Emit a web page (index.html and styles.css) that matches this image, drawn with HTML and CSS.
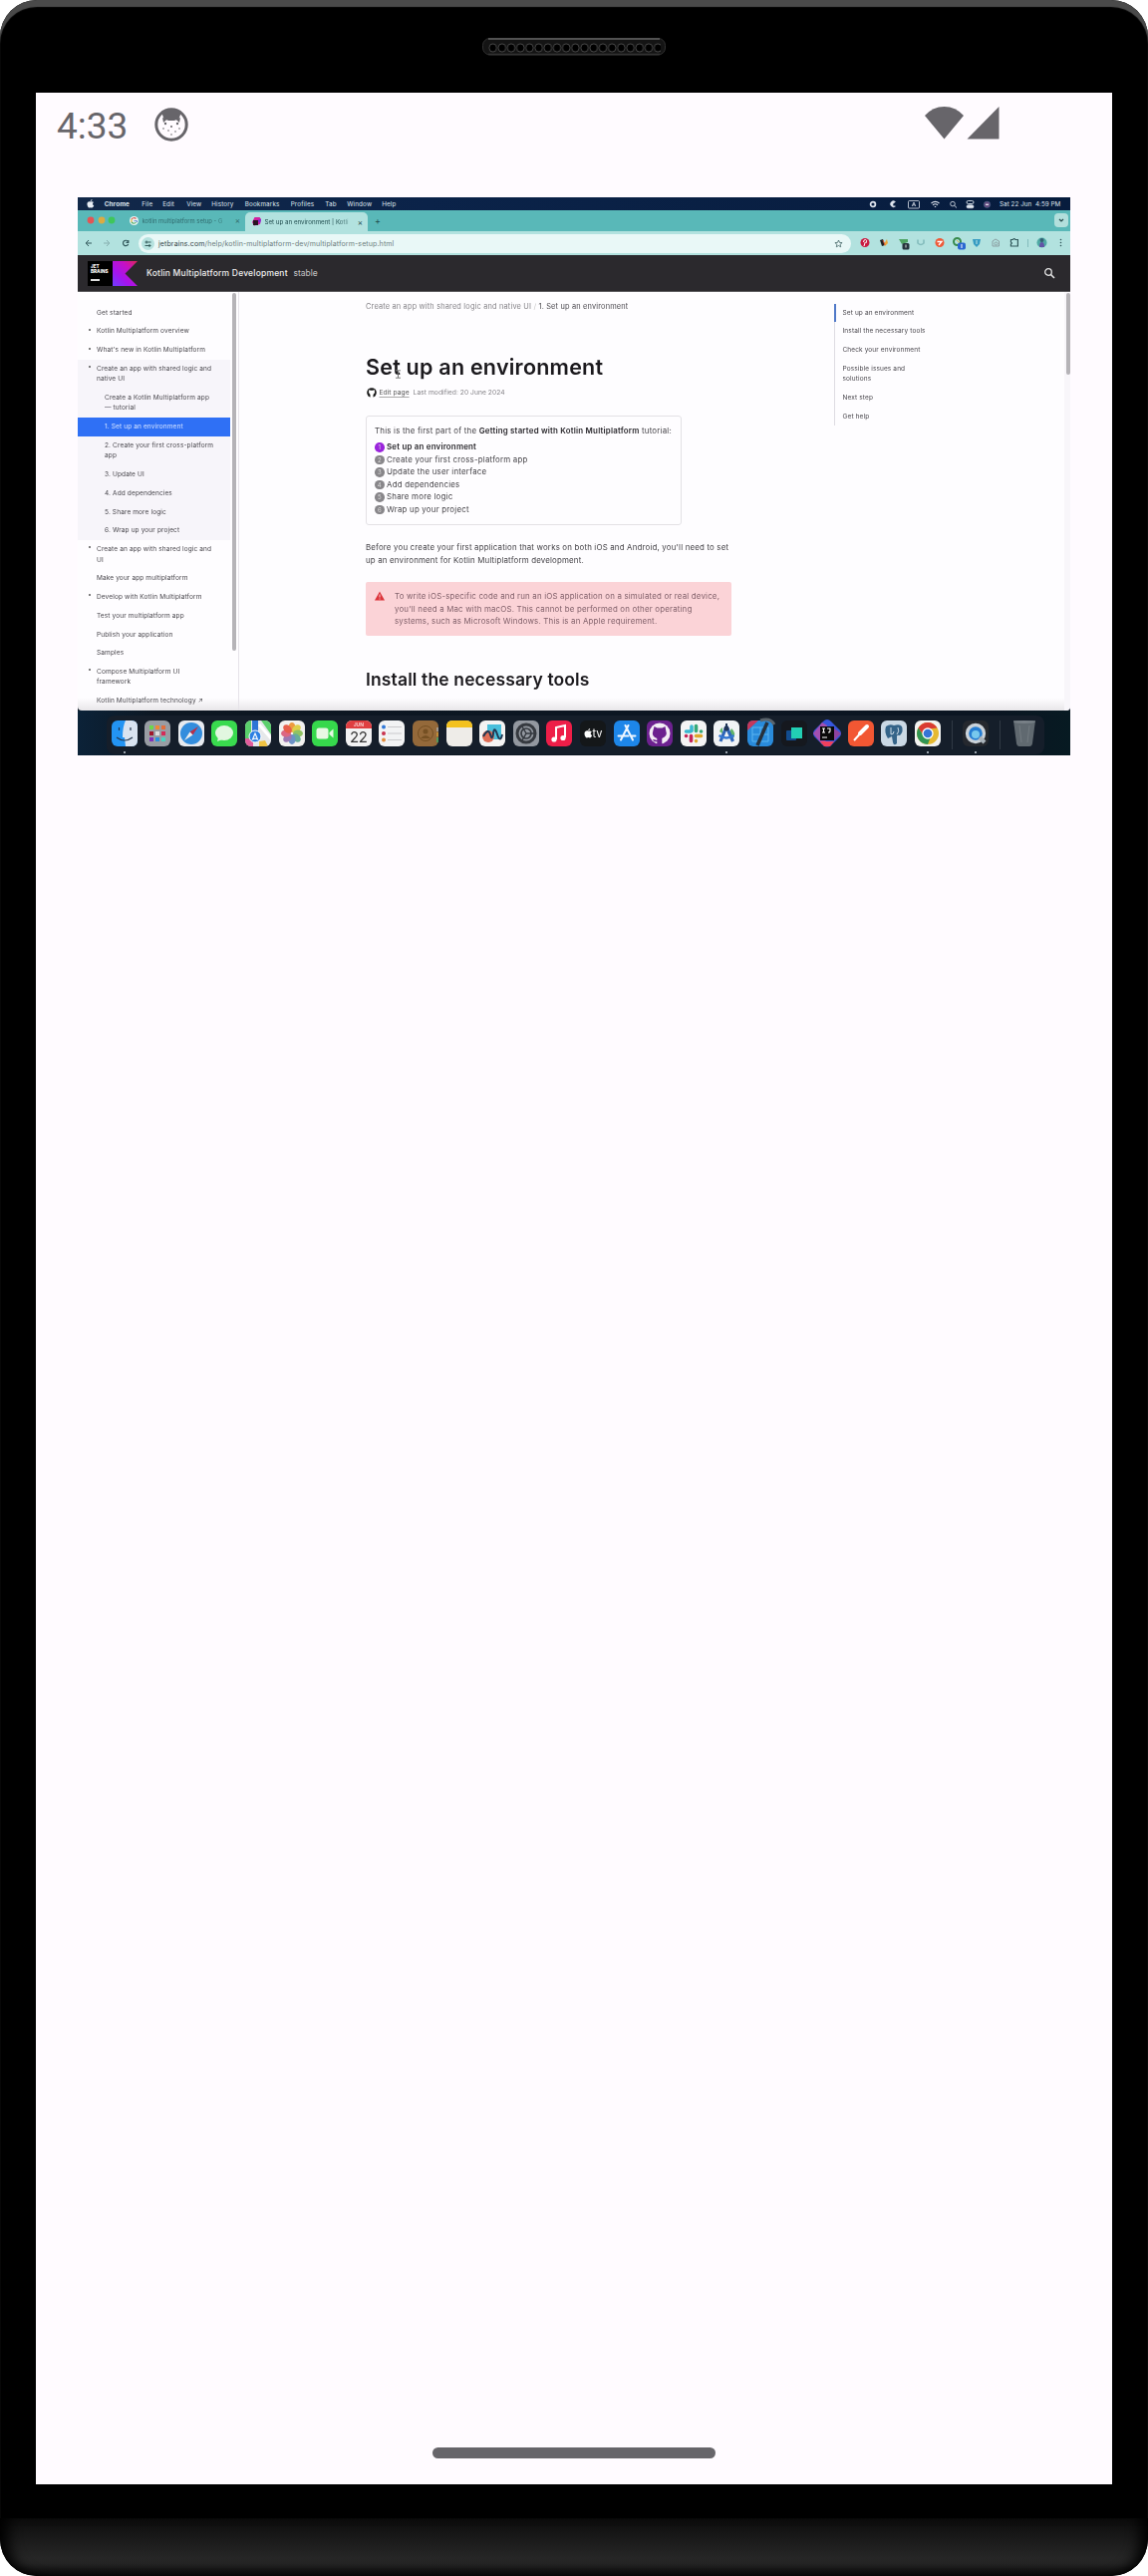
FILE: index.html
```html
<!DOCTYPE html>
<html lang="en">
<head>
<meta charset="utf-8">
<title>Kotlin Multiplatform video</title>
<link rel="stylesheet" href="styles.css">
</head>
<body>
<div class="device">
  <div class="bezel-top"><svg class="speaker" width="184" height="18" viewBox="0 0 184 18">
    <defs><pattern id="holes" x="6" y="0" width="9.2" height="18" patternUnits="userSpaceOnUse"><rect x="1" y="6" width="7.2" height="8" rx="3.4" fill="#000" stroke="#555" stroke-width=".8"/></pattern></defs>
    <rect x=".5" y=".5" width="183" height="16.5" rx="7" fill="#141414" stroke="#303030"/><path d="M6 1h172" stroke="#515151" stroke-width="2"/><path d="M6 16.5h172" stroke="#333" stroke-width="1.4"/><rect x="6" width="173" height="18" fill="url(#holes)"/></svg></div>
  <div class="screen">
    <header class="status">
      <span class="clock">4:33</span>
      <svg class="cat" width="34" height="34" viewBox="0 0 34 34"><circle cx="17" cy="17" r="15.2" fill="none" stroke="#67656a" stroke-width="3"/><path d="M7 4Q17-2 27 4L24 13Q22 11.500 20 13H14Q12 11.500 10 13z" fill="#67656a"/><g fill="#67656a"><path d="M8 10l4 2-3 3zM26 10l-4 2 3 3z"/><circle cx="11" cy="16" r="1.2"/><circle cx="23" cy="16" r="1.2"/><circle cx="17" cy="19" r="1"/><circle cx="9" cy="21" r=".8"/><circle cx="25" cy="21" r=".8"/><circle cx="14" cy="23" r=".8"/><circle cx="21" cy="24" r=".8"/><circle cx="17" cy="27" r=".8"/></g></svg>
      <svg class="signals" width="75" height="33" viewBox="0 0 75 33" fill="#67656a"><path d="M0 9Q8 0 19.500 0T39 9L19.500 32.500z"/><path d="M74.500 0V32.500H42.500z"/></svg>
    </header>

    <div class="video"><div class="desktop">
      <div class="menubar">
        <svg width="8" height="9" viewBox="0 0 16 18" fill="#e8edf4"><path d="M11 0c0 2-1.500 4-3.500 4C7.500 2 9 .5 11 0zM14.500 12.500C13.500 15 12 17 10.500 17S8.500 16.300 7.500 16.300 6 17 5 17C3 17 .8 13 .8 9.500.8 4 6 3.500 8 5c1.500-1 4.500-1 6 1-3 2-2.500 5.500.5 6.500z"/></svg>
        <b>Chrome</b><span>File</span><span>Edit</span><span>View</span><span>History</span><span>Bookmarks</span><span>Profiles</span><span>Tab</span><span>Window</span><span>Help</span>
        <svg class="tray" width="126" height="10" viewBox="0 0 126 10" fill="none" stroke="#dfe5ee"><circle cx="5" cy="5" r="2.400" stroke-width="1.700"/><path d="M27.500 2.500A3 3 0 1 0 27.500 7L25 6.500V4.500z" fill="#dfe5ee" stroke-width=".5"/><rect x="40.500" y="1.500" width="11" height="7.500" rx="1" stroke-width=".8"/><path d="M44.200 7L46 3l1.800 4M45 5.800h2" stroke-width=".8"/><path d="M63.500 4Q67.500 .8 71.500 4M65 5.800q2.500-2 5 0M66.800 7.500h1.400" stroke-width="1.100"/><circle cx="85" cy="4.600" r="2.300" stroke-width=".8"/><path d="M86.700 6.300L89 8.500" stroke-width=".9"/><rect x="99" y="1.500" width="7" height="3" rx="1.500" stroke-width=".9"/><rect x="99" y="5.800" width="7" height="3" rx="1.500" fill="#dfe5ee" stroke-width=".6"/><circle cx="119.500" cy="5.300" r="3.200" fill="#65487d" stroke="#45708c" stroke-width=".5"/><path d="M118 5.300h3" stroke-width="1.300"/></svg>
        <span class="date">Sat 22 Jun&nbsp; 4:59 PM</span>
      </div>
      <div class="tabs">
        <svg width="46" height="10" viewBox="0 0 46 10"><circle cx="13" cy="5" r="3.400" fill="#e25555"/><circle cx="24" cy="5" r="3.400" fill="#dcab42"/><circle cx="34" cy="5" r="3.400" fill="#3fc65b"/></svg>
        <div class="tab idle"><svg width="9" height="9" viewBox="0 0 9 9"><circle cx="4.500" cy="4.500" r="4.500" fill="#e8f5f3"/><path d="M6.500 2.500A3 3 0 0 0 2 3" fill="none" stroke="#d85d55" stroke-width="1.200"/><path d="M2 3v3" stroke="#e3b342" stroke-width="1.200"/><path d="M2 6q2.500 2.500 4.500 0" fill="none" stroke="#4fae68" stroke-width="1.200"/><path d="M4.500 4.700h3V6" fill="none" stroke="#5b88d2"/></svg><span>kotlin multiplatform setup - G</span><i class="x">×</i></div>
        <div class="tab active"><svg width="9" height="9" viewBox="0 0 9 9"><path d="M2.500 0h5L9 2 8 7 2 8.500 0 5z" fill="#d3219f"/><path d="M5 3l4-1-1 4z" fill="#7b28dd"/><rect x="1" y="3" width="5" height="5" fill="#271422"/></svg><span>Set up an environment | Kotli</span><i class="x">×</i></div>
        <i class="plus">+</i>
        <svg class="chev" width="14" height="14" viewBox="0 0 14 14"><rect width="14" height="14" rx="4" fill="#b2dfdc"/><path d="M5 6l2 2 2-2" fill="none" stroke="#24494a" stroke-width="1.200"/></svg>
      </div>
      <div class="toolbar">
        <svg width="54" height="12" viewBox="0 0 54 12" fill="none" stroke="#31575a"><path d="M14 6H8.500M11 3L8.200 6 11 9"/><path d="M26 6h5.500M29 3l2.800 3L29 9" stroke="#85aeae"/><path d="M50.500 4.500A2.700 2.700 0 1 0 50.700 7M50.800 3v2.300h-2.300" stroke-width="1.200"/></svg>
        <div class="omnibox">
          <svg width="13" height="13" viewBox="0 0 13 13"><circle cx="6.500" cy="6.500" r="6.500" fill="#b5e2df"/><path d="M3.500 5h6M3.500 8.500h6M5 3.500v3M8 7v3" stroke="#294e4f" stroke-width=".9"/></svg>
          <span class="url"><b>jetbrains.com</b>/help/kotlin-multiplatform-dev/multiplatform-setup.html</span>
          <svg class="star" width="9" height="9" viewBox="0 0 9 9"><path d="M4.500 1l1 2.400 2.600.2-2 1.700.6 2.500-2.200-1.300-2.200 1.300.6-2.500-2-1.700 2.600-.2z" fill="none" stroke="#466" stroke-width=".8"/></svg>
        </div>
        <svg class="ext" width="212" height="18" viewBox="0 0 212 18" fill="none"><circle cx="6" cy="8.500" r="4.500" fill="#ca1c42"/><path d="M5 12l1.200-4M4.500 8Q4.500 5.500 6.500 5.500T7 9" stroke="#fff"/><path d="M21 6l3-1 2 6-3 1z" fill="#222"/><path d="M25 10l3-5 1 4-3 3z" fill="#eda63b"/><path d="M24 6l2 5" stroke="#d75334"/><path d="M40 5h9v3l-6 2z" fill="#4fa563"/><rect x="43.500" y="9" width="7" height="6.500" rx="1.500" fill="#26343c"/><path d="M47 10.500v3" stroke="#ddd"/><path d="M59 5.500v3.500q3 3 6 0V5.500" stroke="#83bcbc" stroke-width="1.600"/><circle cx="81" cy="8.500" r="4.500" fill="#ee5a38"/><path d="M78.500 7.500h4.500l-3 3.500" stroke="#fff" stroke-width="1.300"/><circle cx="98.500" cy="7.500" r="3.500" stroke="#388a4c" stroke-width="2"/><path d="M98 6l4 4" stroke="#deb84b"/><rect x="99" y="8.500" width="8" height="7" rx="2" fill="#2a67d1"/><path d="M103 10v4" stroke="#fff"/><path d="M114 5h8l-1 5-3 3-3-3z" fill="#369bc2"/><path d="M118 6v4" stroke="#bce5e5"/><path d="M134 12V7l3-2 3.500 2v5z" stroke="#8b9fa2"/><circle cx="137.500" cy="9.500" r="1.500" stroke="#8b9fa2"/><path d="M152.500 5.500h2q1.200-2 2.400 0h2.500v6.500h-7v-2q2-1 0-2z" stroke="#31575a" stroke-width="1.200"/><path d="M169.500 5v8" stroke="#83bcbc"/><circle cx="183.500" cy="8.500" r="5" fill="#50aaa5"/><path d="M181 13q0-5 2.500-5t2.500 5z" fill="#6253a6"/><circle cx="183.500" cy="6" r="2" fill="#345f74"/><g fill="#31575a"><circle cx="202.500" cy="5.500" r=".8"/><circle cx="202.500" cy="8.500" r=".8"/><circle cx="202.500" cy="11.500" r=".8"/></g></svg>
      </div>
      <div class="sitebar">
        <div class="jb"><span>JET<br>BRAINS</span><i></i></div>
        <svg width="25" height="25" viewBox="0 0 25 25"><defs><linearGradient id="kt" x1="1" y1="0" x2="0" y2="1"><stop stop-color="#df2855"/><stop offset=".3" stop-color="#c711c1"/><stop offset=".65" stop-color="#a514ee"/><stop offset="1" stop-color="#6e3dff"/></linearGradient></defs><path d="M0 0h25L12.500 12.500 25 25H0z" fill="url(#kt)"/></svg>
        <span class="title">Kotlin Multiplatform Development</span><span class="stable">stable</span>
        <svg class="search" width="12" height="12" viewBox="0 0 12 12" fill="none" stroke="#e4e4e4"><circle cx="5" cy="5" r="3.300" stroke-width="1.300"/><path d="M7.500 7.500l3.500 3.500" stroke-width="1.600"/></svg>
      </div>
      <div class="page">
        <nav class="side">
          <p>Get started</p><p class="d">Kotlin Multiplatform overview</p><p class="d">What's new in Kotlin Multiplatform</p>
          <div class="group"><p class="d">Create an app with shared logic and<br>native UI</p><p class="sub">Create a Kotlin Multiplatform app<br>— tutorial</p><p class="sub sel">1. Set up an environment</p><p class="sub">2. Create your first cross-platform<br>app</p><p class="sub">3. Update UI</p><p class="sub">4. Add dependencies</p><p class="sub">5. Share more logic</p><p class="sub">6. Wrap up your project</p></div>
          <p class="d">Create an app with shared logic and<br>UI</p><p>Make your app multiplatform</p><p class="d">Develop with Kotlin Multiplatform</p><p>Test your multiplatform app</p><p>Publish your application</p><p>Samples</p><p class="d">Compose Multiplatform UI<br>framework</p><p>Kotlin Multiplatform technology ↗</p>
        </nav>
        <div class="track"><i></i></div>
        <main>
          <div class="crumbs">Create an app with shared logic and native UI <s>/</s> <b>1. Set up an environment</b></div>
          <h1>Set up an environment<svg class="ibeam" width="5" height="9" viewBox="0 0 5 9"><path d="M0 .8h5M0 8.200h5M2.500 1v7" stroke="#777" stroke-width="1"/></svg></h1>
          <div class="meta"><svg width="10" height="10" viewBox="0 0 10 10"><circle cx="5" cy="5" r="4.800" fill="#1a1a1a"/><path d="M2.300 2l1.500.7h2.400L7.700 2l.4 3-1.600 2v3h-3V7L2 5z" fill="#fff"/></svg><u>Edit page</u><span>Last modified: 20 June 2024</span></div>
          <section class="card">
            <p>This is the first part of the <b>Getting started with Kotlin Multiplatform</b> tutorial:</p>
            <ol><li class="on"><i>1</i><b>Set up an environment</b></li><li><i>2</i>Create your first cross-platform app</li><li><i>3</i>Update the user interface</li><li><i>4</i>Add dependencies</li><li><i>5</i>Share more logic</li><li><i>6</i>Wrap up your project</li></ol>
          </section>
          <p class="para">Before you create your first application that works on both iOS and Android, you'll need to set<br><span>up an environment for Kotlin Multiplatform development.</span></p>
          <aside class="alert"><svg width="10" height="10" viewBox="0 0 10 10"><path d="M5 .5L10 9.500H0z" fill="#dc343b"/><path d="M5 3.500v3M5 7.500v1" stroke="#fbd3d7"/></svg><p>To write iOS-specific code and run an iOS application on a simulated or real device,<br>you'll need a Mac with macOS. This cannot be performed on other operating<br>systems, such as Microsoft Windows. This is an Apple requirement.</p></aside>
          <h2>Install the necessary tools</h2>
        </main>
        <nav class="toc"><p class="cur">Set up an environment</p><p>Install the necessary tools</p><p>Check your environment</p><p>Possible issues and<br>solutions</p><p>Next step</p><p>Get help</p></nav>
        <div class="track right"><i></i></div>
      </div>
      <div class="dockarea"><div class="dock">
        <svg class="run" viewBox="0 0 26 26"><rect width="26" height="26" rx="6" fill="#2394f3"/><path d="M14 0h6q6 0 6 6v14q0 6-6 6h-6l-1-9h-2Q11 6 14 0z" fill="#d9e3f0"/><path d="M7.500 7v3M19 7v3M5 17q8 6 16 0" fill="none" stroke="#23364e" stroke-width="1.200"/></svg>
        <svg viewBox="0 0 26 26"><rect width="26" height="26" rx="6" fill="#999da4"/><g><path fill="#6bd84b" d="M5 5h4v4H5z"/><path fill="#ef8a35" d="M11 5h4v4h-4z"/><path fill="#e26e3d" d="M17 5h4v4h-4z"/><path fill="#a1172c" d="M5 11h4v4H5z"/><path fill="#ddd" d="M11 11h4v4h-4z"/><path fill="#d42b58" d="M17 11h4v4h-4z"/><path fill="#8030bb" d="M5 17h4v4H5z"/><path fill="#2b92de" d="M11 17h4v4h-4z"/><path fill="#4ad3c0" d="M17 17h4v4h-4z"/></g></svg>
        <svg viewBox="0 0 26 26"><rect width="26" height="26" rx="6" fill="#e7eaef"/><circle cx="13" cy="13" r="11" fill="#338ddd"/><path d="M20 6l-5.500 8.500-3-3z" fill="#b92f48"/><path d="M6 20l5.500-8.500 3 3z" fill="#eee"/></svg>
        <svg viewBox="0 0 26 26"><rect width="26" height="26" rx="6" fill="#39da4e"/><ellipse cx="13" cy="12.500" rx="9" ry="7.500" fill="#e2f7e0"/><path d="M7 17l-1 4 5-2z" fill="#e2f7e0"/></svg>
        <svg viewBox="0 0 26 26"><clipPath id="c"><rect width="26" height="26" rx="6"/></clipPath><g clip-path="url(#c)"><path fill="#e6e8ea" d="M0 0h26v26H0z"/><path fill="#5bd06c" d="M0 0h6v26H0zM16 0h10v14z"/><path fill="#2e75d5" d="M7 0h6v12H7z"/><path fill="#e15c9c" d="M0 18h8v8H0z"/><path fill="#f1c443" d="M14 21l6-1 3 6h-9z"/><path d="M14 4l12 14" stroke="#fff" stroke-width="3"/></g><circle cx="10" cy="16" r="6" fill="#2c80e3" stroke="#fff"/><path d="M7.500 19l2.500-6 2.500 6-2.500-1z" fill="none" stroke="#fff" stroke-width="1.100"/></svg>
        <svg viewBox="0 0 26 26"><rect width="26" height="26" rx="6" fill="#f2f1ef"/><g opacity=".88"><ellipse cx="13" cy="7" rx="3.500" ry="5" fill="#ee9029"/><ellipse cx="17.500" cy="8.500" rx="5" ry="3.500" fill="#dccb35" transform="rotate(-45 17.500 8.500)"/><ellipse cx="19" cy="13" rx="5" ry="3.500" fill="#83bd50"/><ellipse cx="17.500" cy="17.500" rx="5" ry="3.500" fill="#54a58f" transform="rotate(45 17.500 17.500)"/><ellipse cx="13" cy="19" rx="3.500" ry="5" fill="#5a86c2"/><ellipse cx="8.500" cy="17.500" rx="5" ry="3.500" fill="#9168aa" transform="rotate(-45 8.500 17.500)"/><ellipse cx="7" cy="13" rx="5" ry="3.500" fill="#d95575"/><ellipse cx="8.500" cy="8.500" rx="5" ry="3.500" fill="#e64a35" transform="rotate(45 8.500 8.500)"/></g></svg>
        <svg viewBox="0 0 26 26"><rect width="26" height="26" rx="6" fill="#36d84c"/><rect x="4.500" y="7.500" width="12" height="11" rx="2.500" fill="#e8f8e4"/><path d="M17.500 12l4-3.500v9l-4-3.500z" fill="#e8f8e4"/></svg>
        <div class="cal"><b>JUN</b><span>22</span></div>
        <svg viewBox="0 0 26 26"><rect width="26" height="26" rx="6" fill="#f2f3f4"/><circle cx="5" cy="6.500" r="2" fill="#3279d8"/><circle cx="5" cy="13" r="2" fill="#c9344f"/><circle cx="5" cy="19.500" r="2" fill="#e18c3d"/><path d="M9 6.500h14M9 13h14M9 19.500h14" stroke="#c9c9cc"/></svg>
        <svg viewBox="0 0 26 26"><rect width="26" height="26" rx="6" fill="#94693a"/><path d="M25 7v4" stroke="#aaa" stroke-width="1.500"/><path d="M25 12v4" stroke="#d39a37" stroke-width="1.500"/><path d="M25 17v5" stroke="#43a968" stroke-width="1.500"/><circle cx="13" cy="13" r="7.500" fill="none" stroke="#755023"/><circle cx="13" cy="11" r="2.500" fill="#755023"/><path d="M8 18q5-6 10 0z" fill="#755023"/></svg>
        <svg viewBox="0 0 26 26"><rect width="26" height="26" rx="6" fill="#eeece8"/><path d="M0 7V6q0-6 6-6h14q6 0 6 6v1z" fill="#f3c11e"/></svg>
        <svg viewBox="0 0 26 26"><rect width="26" height="26" rx="6" fill="#f4f3f2"/><path d="M8 4h14v15H8z" fill="#49bfdb"/><circle cx="9" cy="16" r="6" fill="#df6d55"/><path d="M4 16Q9 7 11 14t3-1 4 1 5 0" fill="none" stroke="#203954" stroke-width="2"/></svg>
        <svg viewBox="0 0 26 26"><rect width="26" height="26" rx="6" fill="#9398a0"/><circle cx="13" cy="13" r="9" fill="none" stroke="#363a40" stroke-width="3"/><circle cx="13" cy="13" r="5" fill="none" stroke="#363a40" stroke-width="1.700"/><path d="M13 13h8M13 13L9 6M13 13l-4 7" stroke="#363a40" stroke-width="1.500"/></svg>
        <svg viewBox="0 0 26 26"><rect width="26" height="26" rx="6" fill="#ee1e48"/><path d="M10 19V7l9-2v12" fill="none" stroke="#fff" stroke-width="2"/><circle cx="8" cy="19" r="2.600" fill="#fff"/><circle cx="17" cy="17.500" r="2.600" fill="#fff"/></svg>
        <div class="atv"><svg width="9" height="10" viewBox="0 0 16 18" fill="#fff"><path d="M11 0c0 2-1.500 4-3.500 4C7.500 2 9 .5 11 0zM14.500 12.500C13.500 15 12 17 10.500 17S8.500 16.300 7.500 16.300 6 17 5 17C3 17 .8 13 .8 9.500.8 4 6 3.500 8 5c1.500-1 4.500-1 6 1-3 2-2.500 5.500.5 6.500z"/></svg>tv</div>
        <svg viewBox="0 0 26 26"><rect width="26" height="26" rx="6" fill="#1d86e9"/><path d="M14.500 5L7 19.500M11.500 5L19 19.500M4.500 15.500h10M17.500 15.500h4" stroke="#eef6ff" stroke-width="2" stroke-linecap="round"/></svg>
        <svg viewBox="0 0 26 26"><rect width="26" height="26" rx="6" fill="#6c218f"/><circle cx="13" cy="13" r="10.500" fill="#f3edf5"/><path d="M7.500 6l3 1.500h5L18.500 6l.8 4.500q2 5-4 7.500v6h-5v-3q-3 1-4.500-2 2 0 4.500 1V18q-6-2-4-7.500z" fill="#6c218f"/></svg>
        <svg viewBox="0 0 26 26"><rect width="26" height="26" rx="6" fill="#f4f4f4"/><g stroke-width="3.600" stroke-linecap="round"><path d="M11 6v4.500M5.500 11H10" stroke="#3bb8d1"/><path d="M15.500 5.500v5M20.500 11h.1" stroke="#35a978"/><path d="M15.500 15.500h5M15.500 20.500v.1" stroke="#dfa72c"/><path d="M10.500 15.500v5M5.500 15.500h.1" stroke="#c52357"/></g></svg>
        <svg class="run" viewBox="0 0 26 26"><rect width="26" height="26" rx="6" fill="#f0f3f5"/><path d="M18 8q5 4 2 10l-5-4zM6 11q1-3 3-4v6z" fill="#62b56b"/><path d="M13 6L7 21M13 6l6.500 15" stroke="#2f66b8" stroke-width="3.200"/><path d="M5.500 15q7.500 5 15 0" fill="none" stroke="#3477d2" stroke-width="2.300"/><path d="M13 3v4" stroke="#1f3354" stroke-width="2"/><circle cx="13" cy="8" r="2.500" fill="#1f3354"/></svg>
        <svg viewBox="0 0 26 26"><rect width="26" height="26" rx="6" fill="#298bdb"/><path d="M5 7h16v14H5zM5 14h16M13 7v14" fill="none" stroke="#5db6f1"/><path d="M0 10V6q0-6 6-6h5z" fill="#c5375b"/><path d="M20 2L10 25" stroke="#26313c" stroke-width="3.500"/><path d="M13 0q10-3 14 4" fill="none" stroke="#5a646c" stroke-width="3"/></svg>
        <svg viewBox="0 0 26 26"><rect width="26" height="26" rx="6" fill="#15181e"/><rect x="5" y="10" width="10" height="10" rx="1" fill="#124c8f"/><path d="M10 7h11v11H10z" fill="#22cfb4"/></svg>
        <svg viewBox="0 0 26 26"><path d="M13-1Q15-1 17 1l9 9q2 3 0 6l-9 9q-4 3-8 0l-9-9q-2-3 0-6l9-9q2-2 4-2z" fill="#3657dd"/><path d="M8 2L-1 13l9 11 5-5V5z" fill="#a34fb1"/><path d="M6 21h14l-4 5h-6z" fill="#ef405d"/><path d="M19 7l8 6-8 8z" fill="#8e439f"/><path fill="#090909" d="M6 6h14v14H6z"/><path d="M8 8h3M9.500 8v4M8 12h3M13 8h3v3q0 1-2 1M8 17h5" fill="none" stroke="#fff" stroke-width="1.100"/></svg>
        <svg viewBox="0 0 26 26"><rect width="26" height="26" rx="6" fill="#f25733"/><path d="M6 20l9-10" stroke="#fff" stroke-width="2"/><path d="M12 13l7-7" stroke="#fff" stroke-width="4" stroke-linecap="round"/></svg>
        <svg viewBox="0 0 26 26"><rect width="26" height="26" rx="6" fill="#cbd9e5"/><path d="M5 6q4-3 8-1 6-2 8 1 2 5-2 9-3-1-3 1v7q-3 3-4-1l-1-6-4 2Q3 12 5 6z" fill="#356489"/><path d="M10 7v7q3 0 3-3M17 7q2 4-1 7" fill="none" stroke="#cbd9e5"/></svg>
        <svg class="run" viewBox="0 0 26 26"><rect width="26" height="26" rx="6" fill="#f3f3f1"/><circle cx="13" cy="13" r="11" fill="#e5b931"/><path d="M3.500 7.500A11 11 0 0 1 22.500 7.500L13 8.500 9 15z" fill="#d93b33"/><path d="M3.500 7.500L9 15.500 16 16 13 24A11 11 0 0 1 3.500 7.500z" fill="#319553"/><circle cx="13" cy="13" r="5" fill="#3674d7" stroke="#fff" stroke-width="1.300"/></svg>
        <i class="sep"></i>
        <svg class="run" viewBox="0 0 26 26"><rect width="26" height="26" rx="6" fill="#25282e"/><circle cx="13" cy="13" r="8.500" fill="#267dd2" stroke="#cbd2d9" stroke-width="3.300"/><circle cx="13" cy="14" r="4" fill="#78c9ed"/><path d="M17 17l5 5" stroke="#aab3bb" stroke-width="4"/></svg>
        <i class="sep"></i>
        <svg viewBox="0 0 26 26"><path d="M2 0h22l-3 23q-.5 3-3 3H8q-2.500 0-3-3z" fill="#606970"/><ellipse cx="13" cy="1.500" rx="11" ry="1.500" fill="#788087"/><path d="M8 5l2 17M18 5l-2 17" stroke="#737b81"/></svg>
      </div></div>
    </div></div>
    <div class="home"></div>
  </div>
</div>
</body>
</html>
```
FILE: styles.css
```css
* { box-sizing: border-box; }
body { margin: 0; background: #fff; font-family: Inter, "Liberation Sans", sans-serif; }
p, h1, h2, ol { margin: 0; padding: 0; }
i { font-style: normal; }
svg { display: block; flex: none; }

.device { position: relative; width: 1152px; height: 2585px; border-radius: 37px; background: #000; box-shadow: inset 0 7px 1px #4a4a4a; overflow: hidden; padding: 0 36px; }
.device::after { content: ""; display: block; height: 58px; margin: 34px -36px 0; background: linear-gradient(#0c0c0c, #262626 68%, #242424 78%, #090909); box-shadow: inset 16px 0 14px -8px #000, inset -16px 0 14px -8px #000; border-radius: 0 0 37px 37px; }
.bezel-top { height: 93px; padding: 38px 0 0 447.500px; }
.screen { height: 2400px; background: #fffbff; display: flex; flex-direction: column; }
.status { height: 105px; display: flex; align-items: flex-start; padding: 14px 113px 0 21px; }
.clock { width: 98px; font: 37px/39px Roboto, sans-serif; color: #67656a; }
.cat { margin-top: 1px; }
.signals { margin-left: auto; }
.home { width: 284px; height: 11px; border-radius: 6px; background: #67656a; margin: auto auto 26px; }

.video { width: 996px; height: 560px; margin-left: 42px; overflow: hidden; background: #0d1722; }
.desktop { width: 996px; height: 560px; display: flex; flex-direction: column; filter: blur(.3px); }
.menubar { height: 13px; background: linear-gradient(90deg, #122849, #0b2349 35%, #071c3d); color: #dfe5ee; display: grid; grid-template-columns: 17.700px 37.500px 21px 24px 25px 33.500px 46px 34.500px 22px 35px auto 1fr 71px; align-items: center; padding-left: 9px; font-size: 6.300px; letter-spacing: .15px; }
.tray { justify-self: end; margin-right: 6px; }
.date { white-space: nowrap; letter-spacing: .04px; }
.tabs { height: 21px; background: #59b8b8; display: flex; align-items: center; color: #1f4b4d; font-size: 6.200px; padding-bottom: 1px; }
.tab { display: flex; align-items: center; white-space: nowrap; position: relative; }
.idle { width: 122px; padding-left: 4.500px; gap: 4px; color: #316b6e; }
.idle span, .active span { width: 90px; -webkit-mask: linear-gradient(90deg, #000 82%, transparent); mask: linear-gradient(90deg, #000 82%, transparent); }
.idle span { font-size: 5.900px; }
.idle svg { margin-left: 1px; }
.active { align-self: flex-end; height: 19px; margin-bottom: -1px; width: 123px; background: #b2e2df; border-radius: 5px 5px 0 0; padding-left: 6.500px; gap: 4px; }
.x { font-size: 8px; width: 8px; text-align: center; margin-left: -2px; }
.plus { font-size: 9px; margin-left: 7px; }
.chev { margin: 0 2px 0 auto; }
.toolbar { height: 24px; background: #b2e2df; display: flex; align-items: center; }
.omnibox { margin-left: 7px; width: 715px; height: 19px; border-radius: 10px; background: #e9f8f7; display: flex; align-items: center; padding: 0 8px 0 3px; }
.url { margin-left: 4px; font-size: 7px; letter-spacing: .13px; color: #6b7c7d; }
.url b { font-weight: 400; color: #2f4445; }
.star { margin-left: auto; }
.ext { margin-left: 8px; }
.sitebar { height: 37px; background: #2b292d; border-bottom: 1px solid #5c5b5e; display: flex; align-items: center; padding: 0 15px 0 10px; color: #efefef; font-size: 8.500px; }
.jb { width: 25px; height: 25px; background: #000; color: #fff; font-size: 4.600px; line-height: 5px; font-weight: 800; padding: 3px 0 0 3px; }
.jb i { display: block; width: 9px; height: 2px; background: #ddd; margin-top: 5px; }
.title { margin-left: 9px; width: 147.500px; font-weight: 500; white-space: nowrap; letter-spacing: .2px; }
.stable { color: #c5c5c5; }
.search { margin-left: auto; }

.page { flex: 1; min-height: 0; display: flex; overflow: hidden; background: linear-gradient(transparent 97%, #e8e6e9), #fefdff; border-radius: 0 0 4px 4px; }
.side { width: 153px; padding-top: 11.500px; font-size: 6.500px; letter-spacing: .13px; line-height: 10.400px; color: #48464c; flex: none; }
.side p { padding: 4.180px 0 4.180px 19px; position: relative; white-space: nowrap; }
.side .d::before { content: ""; position: absolute; left: 11px; top: 6.500px; width: 2px; height: 2px; background: #555; border-radius: 1px; }
.side .sub { padding-left: 27px; }
.group { background: #f7f5fa; }
.side .sel { background: #2f70f5; color: #d5e3ff; }
.track { width: 8.500px; border-right: 1px solid #e6e3e9; padding: 1px 0 0 2px; flex: none; }
.track i { display: block; width: 4px; height: 359px; border-radius: 2px; background: #b5b3b7; }
main { width: 469.500px; padding: 9px 0 0 127.500px; flex: none; color: #444247; }
.crumbs { font-size: 7.400px; letter-spacing: .17px; line-height: 12px; color: #858388; white-space: nowrap; }
.crumbs b { font-weight: 400; color: #4c4a50; }
.crumbs s { text-decoration: none; color: #ccc; }
h1 { position: relative; font-size: 21.500px; letter-spacing: .23px; line-height: 30px; font-weight: 600; color: #1b191d; margin-top: 38.500px; white-space: nowrap; }
.ibeam { position: absolute; left: 30px; top: 18px; }
.meta { display: flex; align-items: center; height: 12px; margin-top: 5.500px; font-size: 6.700px; letter-spacing: .04px; color: #858388; white-space: nowrap; }
.meta svg { margin-left: 1px; }
.meta u { text-decoration-color: #aaa; color: #555; margin: 0 4px 0 2.500px; text-underline-offset: 1.500px; }
.card { width: 317px; height: 110px; border: 1px solid #e3e1e5; border-radius: 3px; margin-top: 17px; padding: 7.500px 0 0 8px; font-size: 7.900px; letter-spacing: .21px; line-height: 12.500px; white-space: nowrap; }
.card b { color: #29272c; font-weight: 600; }
.card ol { list-style: none; margin-top: 4px; }
.card li { display: flex; align-items: center; height: 12.500px; }
.card i { width: 9.500px; height: 9.500px; border-radius: 50%; background: #88868a; color: #ddd; font-size: 6px; letter-spacing: 0; line-height: 9.500px; text-align: center; margin: 1px 2.500px 0 0; }
.card .on i { background: #9a24dc; }
.para { font-size: 7.900px; letter-spacing: .17px; line-height: 12.500px; margin-top: 16px; white-space: nowrap; }
.alert { width: 367px; height: 54px; background: #fbd3d7; border-radius: 2px; margin-top: 16px; padding: 8px 9px; display: flex; gap: 10px; font-size: 7.900px; letter-spacing: .18px; line-height: 12.500px; color: #80606a; white-space: nowrap; }
.alert svg { margin-top: 1px; }
h2 { font-size: 17.500px; letter-spacing: .13px; line-height: 24px; font-weight: 600; color: #1b191d; margin-top: 32px; white-space: nowrap; }
.toc { align-self: flex-start; margin: 11.500px 0 0 127.500px; border-left: 1px solid #dedce2; font-size: 6.500px; letter-spacing: .12px; line-height: 10.400px; color: #48464c; width: 230px; }
.toc p { padding: 4.180px 0 4.180px 8px; white-space: nowrap; }
.toc .cur { border-left: 2px solid #5079c8; margin-left: -1px; padding-left: 7px; }
.right { margin-left: auto; width: 6px; border: 0; background: #f8f6fa; }
.right i { height: 82px; }

.dockarea { height: 45px; background: linear-gradient(90deg, #0b2238, #0d1722 8%, #0b1522 92%, #071a22); padding: 5px 26px 1px 29px; }
.dock { height: 39px; border-radius: 8px; background: #151e2a; padding: 5px 4.700px 0; display: flex; gap: 7.600px; }
.dock > svg { width: 26px; height: 26px; overflow: visible; }
.dock > .run { height: 33px; padding-bottom: 7px; background: radial-gradient(circle at 13px 32px, #9aa3ad 1px, transparent 1.400px); }
.cal { width: 26px; height: 26px; border-radius: 6px; background: #f2f2f3; overflow: hidden; text-align: center; color: #333; flex: none; font-size: 15px; line-height: 18px; }
.cal b { display: block; background: #df3e41; color: #f7cccc; font-size: 5px; line-height: 8px; }
.cal span { display: block; letter-spacing: -.3px; }
.atv { width: 26px; height: 26px; border-radius: 6px; background: #141719; color: #fff; font-size: 11px; display: flex; align-items: center; justify-content: center; flex: none; }
.sep { width: 1px; height: 29px; background: #303944; flex: none; margin: 0 3px 0 3.300px; }
```
